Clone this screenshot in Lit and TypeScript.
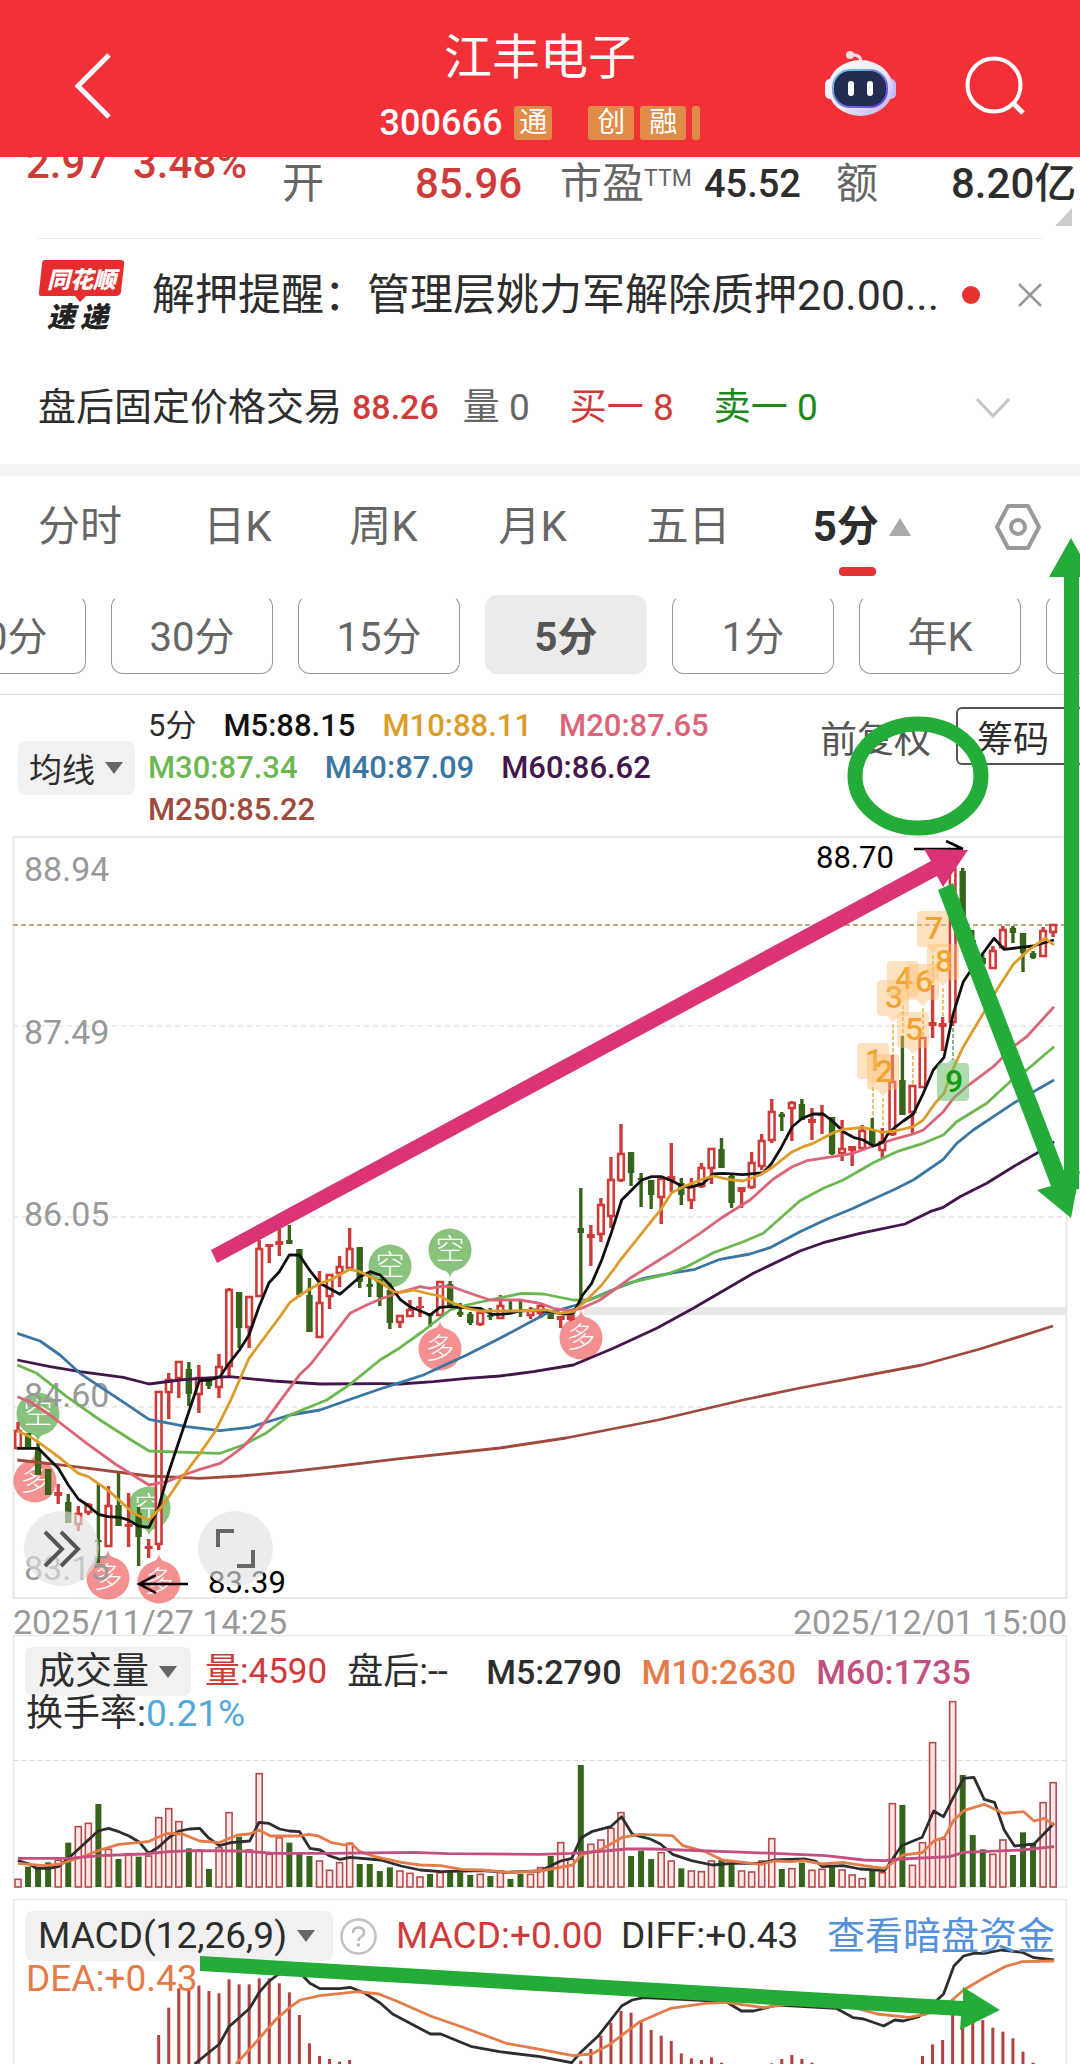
import { LitElement, html, svg, css } from "lit";
import { customElement } from "lit/decorators.js";

type Candle = [kind: string, high: number, top: number, bottom: number, low: number];
type Run = [ox: number, oy: number, kx: number, points: string];

const FIRST_X = 18;
const STEP = 10.05;
const barX = (i: number) => FIRST_X + STEP * i;

const CANDLES: Candle[] = [
  ["r", 1422, 1430, 1449, 1449], ["g", 1433, 1433, 1447, 1449], ["g", 1443, 1449, 1475, 1475], ["g", 1469, 1469, 1495, 1495],
  ["r", 1484, 1492, 1496, 1504], ["g", 1494, 1502, 1523, 1523], ["r", 1506, 1513, 1525, 1531], ["r", 1503, 1504, 1513, 1515],
  ["g", 1484, 1540, 1542, 1563], ["r", 1486, 1505, 1547, 1547], ["g", 1473, 1505, 1526, 1526], ["r", 1493, 1524, 1527, 1547],
  ["g", 1507, 1513, 1537, 1566], ["r", 1539, 1546, 1549, 1558], ["r", 1391, 1391, 1545, 1550], ["r", 1373, 1379, 1393, 1419],
  ["r", 1361, 1361, 1379, 1398], ["g", 1362, 1369, 1394, 1406], ["r", 1365, 1377, 1395, 1413], ["g", 1378, 1378, 1386, 1389],
  ["r", 1354, 1366, 1388, 1398], ["r", 1288, 1289, 1367, 1378], ["g", 1292, 1292, 1328, 1348], ["r", 1296, 1296, 1328, 1348],
  ["r", 1240, 1248, 1297, 1297], ["r", 1244, 1244, 1247, 1263], ["r", 1228, 1241, 1245, 1256], ["g", 1225, 1240, 1244, 1244],
  ["g", 1249, 1249, 1295, 1297], ["g", 1278, 1295, 1332, 1332], ["r", 1271, 1302, 1338, 1338], ["r", 1274, 1274, 1297, 1309],
  ["r", 1256, 1266, 1274, 1287], ["r", 1228, 1248, 1269, 1269], ["g", 1247, 1247, 1282, 1288], ["g", 1274, 1284, 1287, 1297],
  ["g", 1279, 1279, 1297, 1306], ["g", 1283, 1290, 1323, 1329], ["r", 1315, 1315, 1323, 1328], ["r", 1300, 1309, 1317, 1317],
  ["r", 1297, 1306, 1307, 1317], ["g", 1313, 1314, 1316, 1327], ["r", 1281, 1281, 1316, 1316], ["g", 1281, 1284, 1308, 1308],
  ["g", 1303, 1312, 1315, 1317], ["g", 1312, 1314, 1323, 1325], ["r", 1311, 1312, 1325, 1326], ["g", 1308, 1315, 1317, 1320],
  ["r", 1295, 1305, 1319, 1319], ["g", 1300, 1310, 1312, 1314], ["g", 1300, 1310, 1311, 1317], ["r", 1307, 1310, 1316, 1319],
  ["r", 1303, 1305, 1314, 1318], ["g", 1310, 1310, 1319, 1319], ["r", 1316, 1316, 1320, 1328], ["r", 1315, 1315, 1320, 1321],
  ["g", 1188, 1228, 1233, 1300], ["r", 1225, 1234, 1238, 1266], ["r", 1198, 1204, 1235, 1242], ["r", 1157, 1179, 1217, 1228],
  ["r", 1124, 1153, 1181, 1182], ["g", 1152, 1152, 1173, 1186], ["g", 1173, 1178, 1180, 1207], ["g", 1180, 1180, 1195, 1209],
  ["r", 1178, 1178, 1198, 1224], ["r", 1143, 1176, 1181, 1192], ["g", 1178, 1183, 1195, 1205], ["r", 1178, 1185, 1201, 1209],
  ["r", 1163, 1167, 1187, 1188], ["r", 1148, 1148, 1169, 1184], ["g", 1138, 1149, 1168, 1168], ["g", 1175, 1176, 1203, 1208],
  ["r", 1187, 1187, 1192, 1208], ["r", 1152, 1162, 1188, 1189], ["r", 1134, 1140, 1167, 1170], ["r", 1099, 1111, 1141, 1143],
  ["g", 1112, 1114, 1117, 1131], ["r", 1101, 1102, 1109, 1141], ["g", 1099, 1104, 1120, 1120], ["r", 1108, 1119, 1123, 1140],
  ["r", 1105, 1114, 1115, 1134], ["g", 1117, 1117, 1154, 1155], ["r", 1120, 1148, 1154, 1161], ["r", 1146, 1146, 1151, 1166],
  ["r", 1125, 1130, 1149, 1149], ["g", 1118, 1130, 1145, 1146], ["r", 1128, 1141, 1151, 1158], ["r", 1055, 1081, 1135, 1136],
  ["g", 1036, 1080, 1115, 1115], ["r", 1085, 1085, 1113, 1133], ["r", 1037, 1037, 1088, 1088], ["r", 985, 1022, 1026, 1038],
  ["r", 1017, 1023, 1027, 1051], ["r", 860, 868, 1023, 1026], ["g", 868, 871, 930, 930], ["g", 930, 940, 950, 955],
  ["g", 955, 958, 964, 965], ["r", 946, 950, 969, 969], ["r", 926, 929, 948, 949], ["g", 926, 928, 933, 943],
  ["g", 933, 933, 953, 972], ["g", 951, 953, 958, 959], ["r", 927, 930, 957, 957], ["r", 924, 924, 933, 937],
];

const VOLUMES =
  "r715 g680 g680 g667 r658 g608 r557 r547 g492 r625 g657 r638 g650 r645 r530 r503 r542 g625 r627 g687 r620 r515 g590 r627 r398 r640 r590 g608 g642 g648 r660 r688 r665 r607 g672 g672 g693 g682 r690 r697 r708 g702 r695 g695 g697 g705 r700 g708 r690 g717 g702 r700 r680 g648 r605 r655 g375 r610 r597 r562 r515 g648 g632 g657 r635 r660 g685 r690 r692 r660 g660 g670 r690 r693 r660 r593 g687 r683 g668 r688 r685 g680 r687 r702 r713 g692 r695 r488 g495 r673 r605 r305 r595 r182 g405 g585 g628 r640 r597 g645 g577 g612 r485 r425".split(" ");

const MACD_RUNS: [number, number[]][] = [
  [14, [1185, 1103, 1045, 1045, 1037, 1053, 1060, 1018, 1033, 1033, 1015, 1015, 1030, 1057, 1125, 1210, 1248, 1257, 1265, 1260]],
  [56, [1262, 1227, 1187, 1148, 1113, 1118, 1140, 1170, 1187, 1203, 1240, 1255, 1260, 1252, 1268]],
  [75, [1270, 1257, 1245, 1257, 1268]],
  [90, [1248, 1213, 1200, 1125, 1120, 1130, 1140, 1163, 1175, 1195, 1235, 1268]],
];

const A = (p: string): Run => [0, 1180, 3, p];
const B = (p: string): Run => [400, 1100, 3, p];
const C = (p: string): Run => [540, 1080, 3, p];
const D = (p: string): Run => [780, 820, 3, p];
const L = (p: string): Run => [0, 1640, 2.904, p];
const R = (p: string): Run => [540, 1640, 2.904, p];

const PRICE_LINES: [string, Run[]][] = [
  ["#a0493c", [
    A("52,840 200,857 447,888 600,895 720,888 870,875 1000,860 1200,836"),
    [0, 0, 1, "500,4344 566,4314 658,4260 743,4200 800,4164 922,4095 980,4047 1053,3978"],
  ]],
  ["#43154c", [
    A("52,540 150,560 240,575 370,592 447,612 540,600 600,595 690,590 820,603 960,612 1140,611"),
    B("0,852 100,845 200,835 300,828 400,815 520,795 640,745 770,685 880,625 1060,520"),
    C("780,513 850,488 960,460"),
    D("280,1232 375,1212 450,1175 490,1162 540,1130 620,1090 700,1040 770,1000 822,965"),
  ]],
  ["#3a76a4", [
    A("52,460 120,483 180,525 240,580 300,620 390,680 447,718 560,740 660,752 750,742 870,705 960,690 1060,655 1140,627"),
    B("0,848 70,825 200,765 300,715 440,640 530,615 650,565 730,535 810,520 885,508 960,478 1050,462 1110,443"),
    C("780,455 860,418 940,385"),
    D("280,1137 340,1110 400,1080 490,1018 530,970 580,930 700,850 822,780"),
  ]],
  ["#6bb850", [
    A("52,555 110,580 200,650 300,720 390,778 447,813 560,817 660,820 730,795 800,758 870,705 980,660 1050,613 1140,540"),
    B("0,743 70,693 150,630 200,615 270,600 365,580 430,582 520,600 570,600 620,580 680,550 800,523 860,500 940,458 1030,425 1090,400"),
    C("780,362 850,325 910,300"),
    D("280,1028 350,995 430,970 490,945 530,905 620,850 690,785 740,750 822,680"),
  ]],
  ["#dc6478", [
    A("52,650 90,665 150,705 260,790 350,855 447,915 500,905 550,885 600,868 660,850 690,830 730,800 780,745 850,650 900,583 930,555 990,478 1050,400 1100,375 1140,358"),
    B("0,577 60,560 90,565 130,558 160,562 210,580 270,600 360,600 420,610 460,625 500,632 545,625 600,600 690,535 810,460 900,400 970,350 1050,300 1120,237"),
    C("757,260 800,242 860,233 940,220"),
    D("280,978 340,958 400,942 430,930 490,875 520,835 560,800 640,740 700,680 740,650 822,560"),
  ]],
  ["#101010", [
    A("52,805 115,805 150,840 175,865 205,915 235,957 262,975 295,1003 325,1010 360,1012 385,1020 415,1038 447,1042 475,985 505,880 535,790 565,700 598,602 630,600 660,590 687,550 717,512 747,465 777,380 807,308 838,275 868,225 898,225 930,272 960,310 1020,343 1080,290 1110,275 1140,285 1170,315"),
    B("0,598 30,620 90,645 120,622 150,620 180,622 240,625 275,643 300,643 330,640 360,633 400,630 450,635 490,642 520,640 548,585 575,550 605,480 635,395 665,300 695,270 725,240 755,230 785,230 815,242 845,258 870,262 910,250 940,222 970,220 1030,224 1090,218 1115,190 1145,140"),
    C("757,140 787,115 820,102 850,102 880,125 910,155 940,172 970,180"),
    D("280,978 290,975 310,965 325,940 345,922 370,903 400,882 430,820 460,750 492,712 520,580 550,485 580,440 605,405 642,355 672,388 760,378 822,360"),
  ]],
  ["#dc9c28", [
    A("52,752 90,770 120,790 175,830 235,880 265,890 330,935 400,1000 447,1020 490,975 540,900 600,820 645,755 690,665 747,535 810,450 840,410 870,367 900,345 960,310 990,300 1050,268 1080,275 1140,305 1180,335"),
    B("0,577 40,570 90,582 120,588 150,605 200,625 240,633 330,633 440,630 480,640 520,635 560,600 605,555 640,510 665,475 725,400 785,325 815,278 850,260 910,237 940,228 985,238 1030,243 1080,225 1120,200"),
    C("757,215 790,200 820,190 880,158 910,148 970,142 1000,150"),
    D("310,937 345,933 400,920 430,900 465,850 492,820 520,745 550,680 610,580 650,510 700,433 740,395 795,355 822,375"),
  ]],
];

const VOLUME_LINES: [string, Run[]][] = [
  ["#2d2d2d", [
    L("52,662 85,672 105,685 140,685 170,680 215,640 285,573 315,565 345,575 375,588 405,607 432,640 460,622 490,593 520,573 550,567 580,565 605,593 637,617 670,608 725,603 752,547 780,550 812,567 840,573 870,575 900,625 930,630 958,648 988,658 1017,652 1105,660 1165,678 1220,690 1280,695 1400,692 1470,697"),
    R("0,693 60,663 92,655 120,593 150,575 205,560 237,530 268,583 320,597 350,612 385,643 440,662 500,675 560,670 640,670 680,660 770,657 800,663 820,680 880,677 930,687 1000,692 1050,617 1110,592 1143,513 1172,530 1200,473 1230,415 1260,412 1290,478 1320,487 1348,570 1378,618 1435,612 1493,550"),
  ]],
  ["#e57b48", [
    L("52,670 130,677 175,672 240,650 290,630 345,613 430,605 485,580 530,582 580,603 635,608 690,585 725,582 752,570 785,588 870,588 895,583 925,588 960,607 1000,615 1020,610 1045,635 1090,650 1165,667 1220,675 1280,677 1340,688 1400,690 1480,697"),
    R("0,693 95,675 120,645 180,627 240,592 290,583 385,587 415,617 480,635 530,660 640,673 680,663 730,665 765,662 820,672 880,667 940,677 1000,685 1055,645 1110,638 1145,602 1175,592 1200,543 1230,512 1290,493 1345,520 1405,515 1435,543 1465,535 1493,555"),
  ]],
  ["#c34e80", [
    L("52,655 200,655 290,647 420,642 490,635 560,632 700,633 800,640 950,640 1200,637 1300,641"),
    R("0,643 90,640 190,633 250,627 330,627 600,637 830,647 940,660 1000,662 1050,657 1190,650 1230,637 1400,630 1493,620"),
  ]],
];

const MACD_LINES: [string, Run[]][] = [
  ["#2d2d2d", [
    L("565,1272 637,1212 665,1160 725,1105 752,1058 780,1025 805,1005 845,992 880,1008 900,1030 930,1046 985,1046 1017,1042 1060,1060 1105,1090 1140,1122 1250,1182 1280,1182 1370,1220 1450,1235"),
    R("0,1250 92,1268 120,1235 170,1187 237,1098 268,1080 300,1073 410,1078 540,1085 585,1113 620,1113 690,1095 860,1105 910,1133 940,1137 998,1158 1030,1140 1055,1143 1100,1130 1172,1062 1202,978 1230,948 1260,940 1290,940 1340,930 1400,937 1435,953 1493,960"),
  ]],
  ["#e57b48", [
    L("685,1272 725,1228 800,1140 840,1103 872,1080 930,1067 1040,1055 1100,1062 1160,1087 1250,1128 1340,1160 1470,1210"),
    R("0,1228 95,1247 150,1242 200,1215 290,1145 380,1105 480,1090 540,1087 650,1103 740,1090 900,1100 980,1122 1070,1132 1120,1123 1170,1105 1230,1050 1290,1013 1350,980 1400,965 1493,963"),
  ]],
];

const project = (runs: Run[]) =>
  runs
    .map(([ox, oy, kx, points]) =>
      points
        .split(" ")
        .map((pair) => {
          const [x, y] = pair.split(",").map(Number);
          return `${(ox + x / kx).toFixed(1)},${(oy + y / 3).toFixed(1)}`;
        })
        .join(" "),
    )
    .join(" ");

const drawLines = (lines: [string, Run[]][]) =>
  lines.map(([color, runs]) => svg`<polyline class="trace" stroke=${color} points=${project(runs)}></polyline>`);

const drawCandle = ([kind, high, top, bottom, low]: Candle, i: number) => {
  const x = barX(i);
  if (kind === "g") {
    return svg`<g fill="#35641a"><rect x=${x - 1.7} y=${high} width="3.4" height=${low - high}></rect>
      <rect x=${x - 3.2} y=${top} width="6.4" height=${Math.max(bottom - top, 2)}></rect></g>`;
  }
  const hollow = bottom - top > 5;
  return svg`<g fill="#cf3b39"><rect x=${x - 1.7} y=${high} width="3.4" height=${top - high + 1}></rect>
    <rect x=${x - 1.7} y=${bottom - 1} width="3.4" height=${low - bottom + 1}></rect>
    ${hollow
      ? svg`<rect x=${x - 2.8} y=${top + 1} width="5.6" height=${bottom - top - 2} fill="#fff" stroke="#cf3b39" stroke-width="2.6"></rect>`
      : svg`<rect x=${x - 4} y=${top} width="8" height=${Math.max(bottom - top, 2)}></rect>`}</g>`;
};

const drawVolume = (entry: string, i: number) => {
  const x = barX(i);
  const top = 1640 + Number(entry.slice(1)) / 3;
  return entry[0] === "g"
    ? svg`<rect x=${x - 3} y=${top} width="6" height=${1887 - top} fill="#35641a"></rect>`
    : svg`<rect x=${x - 3} y=${top + 1} width="6" height=${1886 - top} fill="#fde7e7" stroke="#b84a4a" stroke-width="1.6"></rect>`;
};

const PINS: [string, number, number][] = [
  ["空", 38, 1414], ["空", 149, 1508], ["空", 390, 1266], ["空", 450, 1250],
  ["多", 35, 1481], ["多", 108, 1578], ["多", 159, 1582], ["多", 440, 1349], ["多", 581, 1338],
];

const drawPin = ([label, x, y]: [string, number, number]) => {
  const down = label === "空";
  const color = down ? "#72b765" : "#f27d7b";
  const s = down ? 1 : -1;
  return svg`<g><g fill=${color} opacity="0.84"><circle cx=${x} cy=${y} r="21.5"></circle>
    <path d="M${x - 8} ${y + 19 * s} Q${x} ${y + 22 * s} ${x} ${y + 29 * s} Q${x} ${y + 22 * s} ${x + 8} ${y + 19 * s}Z"></path></g>
    <text class="pin-text" x=${x} y=${y + 10}>${label}</text></g>`;
};

const TAGS: [string, number, number, number][] = [
  ["1", 873, 1043, 1118], ["2", 883, 1054, 1128], ["3", 893, 980, 1055], ["4", 903, 961, 1036],
  ["5", 913, 1012, 1085], ["6", 923, 964, 1037], ["7", 933, 911, 985], ["8", 943, 944, 1017],
];

const drawTag = ([label, x, y, end]: [string, number, number, number]) => svg`<g>
  <path d="M${x} ${y + 44} V${end}" stroke="#f0c070" stroke-width="2" stroke-dasharray="4 2"></path>
  <path d="M${x - 12} ${y} h24 q4 0 4 4 v28 q0 4 -4 4 h-6 l-6 6 l-6 -6 h-6 q-4 0 -4 -4 v-28 q0 -4 4 -4Z" fill="#fdbf72" opacity="0.45"></path>
  <text class="tag-text" x=${x + 1} y=${y + 28}>${label}</text></g>`;

const caret = html`<svg class="caret" viewBox="0 0 18 12" aria-hidden="true"><path d="M0 0h18l-9 12z" fill="#666"></path></svg>`;

@customElement("app-root")
export class AppRoot extends LitElement {
  static styles = css`
    :host { display: block; background: #fff; color: #2d2d2d; font-family: Roboto, "Noto Sans CJK SC", sans-serif; }
    * { box-sizing: border-box; }
    button { border: 0; padding: 0; margin: 0; background: none; color: inherit; font: inherit; white-space: nowrap; }
    svg { display: block; }
    .page { position: relative; overflow: hidden; }
    .red { color: #cf3b39; }
    .green { color: #1a8a1a; }
    .grey { color: #666; }

    .header { display: grid; grid-template-columns: 1fr auto 1fr; align-items: center; padding: 28px 54px 14px 66px; background: #f13038; color: #fff; }
    .back { justify-self: start; }
    .back svg { width: 50px; height: 70px; }
    .title { margin: 0; font-size: 48px; line-height: 60px; font-weight: 400; text-align: center; }
    .heading { margin-left: -12px; display: grid; gap: 15px; }
    .code-row { display: flex; align-items: center; height: 40px; gap: 6px; font-size: 36px; font-weight: 500; line-height: 40px; }
    .badge { width: 46px; height: 34px; border-radius: 3px; background: #e08c48; font-size: 28px; line-height: 34px; text-align: center; font-weight: 400; }
    .badge.first { width: 38px; margin: 0 30px 0 6px; }
    .badge.cut { width: 8px; }
    .tools { display: flex; justify-content: flex-end; align-items: center; gap: 66px; }
    .robot { width: 76px; height: 76px; }
    .search { width: 62px; height: 62px; }

    .quote { display: grid; grid-template-columns: 107fr 149fr 133fr 145fr 144fr 132fr 115fr 127fr; align-items: center; height: 81px; padding: 0 2px 28px 26px; overflow: hidden; white-space: nowrap; font-size: 42px; line-height: 52px; }
    .quote > * { min-width: 0; }
    .quote b { font-weight: 500; }
    .quote .ratio { font-size: 38px; }
    .quote .change { margin-top: -40px; }
    .quote sup { font-size: 23px; line-height: 20px; vertical-align: 12px; }
    .rule { margin: 0 38px; border: 0; border-top: 1px solid #ebebeb; }
    .corner { position: absolute; right: 8px; top: 208px; width: 17px; height: 18px; }

    .news { display: flex; align-items: center; padding: 20px 38px; line-height: 52px; font-size: 43px; }
    .logo { width: 86px; height: 72px; margin-right: 28px; flex: none; }
    .news-text { color: inherit; text-decoration: none; white-space: nowrap; overflow: hidden; text-overflow: clip; flex: 1; }
    .dot { width: 18px; height: 18px; border-radius: 50%; background: #e73131; margin: 0 38px 0 12px; }
    .close svg { width: 24px; height: 24px; }

    .after { display: flex; align-items: center; padding: 30px 69px 30px 38px; line-height: 53px; font-size: 37px; }
    .after .name { font-size: 38px; margin-right: 10px; }
    .after b { font-size: 34px; font-weight: 500; margin-right: 24px; }
    .after .gap { margin-right: 40px; }
    .more { margin-left: auto; }
    .more svg { width: 36px; height: 22px; }
    .band { height: 12px; background: #f4f4f4; }

    .tabs { display: grid; grid-template-columns: 165fr 146fr 149fr 148fr 166fr 180fr 87fr; padding: 25px 0 0 38px; font-size: 42px; line-height: 52px; color: #666; }
    .tabs button { text-align: left; align-self: start; line-height: 52px; }
    .tabs .active { font-weight: 700; color: #2d2d2d; display: grid; grid-template-columns: auto 1fr; column-gap: 10px; align-items: center; }
    .tabs .active::after { content: ""; grid-column: 1 / 3; width: 37px; height: 9px; margin: 14px 0 0 26px; border-radius: 4px; background: #e23232; }
    .up { width: 22px; height: 18px; }
    .gear { width: 50px; height: 52px; }
    .pills { display: flex; gap: 25px; margin-left: -76px; padding: 19px 0 20px; border-bottom: 1px solid #e4e4e4; overflow: hidden; }
    .pill { flex: none; width: 162px; height: 79px; padding-bottom: 2px; border: 1px solid #999; border-top-color: transparent; border-radius: 12px; color: #666; font-size: 40px; text-align: center; }
    .pill.on { background: #ebebeb; border-color: #ebebeb; color: #555; font-weight: 700; }

    .legend { display: grid; grid-template-columns: 130px 1fr auto; padding: 10px 0 0 18px; }
    .drop { display: inline-flex; align-items: center; border-radius: 8px; background: #f1f1f1; }
    .caret { width: 18px; height: 12px; }
    .ma { align-self: center; width: 117px; height: 54px; padding-left: 11px; gap: 10px; font-size: 33px; }
    .values { display: flex; flex-wrap: wrap; column-gap: 27px; max-width: 600px; font-size: 31px; line-height: 42px; }
    .values span + span, .avg { font-weight: 500; }
    .side { display: flex; align-items: flex-start; gap: 25px; font-size: 37px; }
    .adjust { margin-top: 8px; line-height: 56px; color: #555; }
    .chips { width: 124px; height: 58px; margin-top: 2px; padding-left: 19px; text-align: left; border: 2px solid #555; border-right: 0; border-radius: 6px 0 0 6px; font-size: 36px; }

    .stage { position: relative; }
    .chart { width: 100%; height: auto; }
    .chart text { font-size: 34px; fill: #999; }
    .chart .ink { font-size: 31px; fill: #000; }
    .chart .pin-text { font-size: 29px; font-weight: 300; fill: #fff; text-anchor: middle; }
    .chart .tag-text { font-size: 32px; font-weight: 500; fill: #f2a432; text-anchor: middle; }
    .chart .tag-green { fill: #159a15; }
    .trace { fill: none; stroke-width: 2.8; stroke-linejoin: round; }
    .round { position: absolute; top: 680px; width: 75px; height: 75px; border-radius: 50%; background: rgba(226, 226, 226, 0.64); }
    .round.next { left: 24px; }
    .round.full { left: 198px; }
    .dates { display: flex; justify-content: space-between; padding: 0 13px; font-size: 34px; line-height: 32px; color: #999; }

    .panel { display: grid; }
    .panel > * { grid-area: 1 / 1; }
    .volume { margin-top: -3px; }
    .info { z-index: 1; padding: 12px 25px 0; line-height: 36px; font-size: 34px; align-self: start; }
    .row { display: flex; align-items: center; white-space: nowrap; }
    .info .drop { height: 49px; padding: 0 14px 0 13px; gap: 10px; font-size: 37px; }
    .vol-row > span { margin-left: 20px; }
    .vol-row .lot { margin-left: 14px; font-size: 35px; }
    .vol-row .late { min-width: 122px; font-size: 36px; }
    .vol-row .first-avg { margin-left: 17px; }
    .second { padding-left: 1px; font-size: 37px; }
    .macd-row { font-size: 37px; }
    .macd-row .drop { width: 308px; height: 50px; }
    .help { margin: 0 19px 0 7px; }
    .help svg { width: 37px; height: 37px; }
    .macd-row .diff { margin-left: 18px; }
    .dark-pool { margin-left: auto; color: #5490dc; text-decoration: none; font-size: 38px; }
    .orange { color: #e57b48; }
    .marks { position: absolute; left: 0; top: 0; z-index: 2; width: 100%; height: auto; pointer-events: none; }
  `;

  render() {
    return html`
      <main class="page">
        <header class="header">
          <button class="back" aria-label="返回">
            <svg viewBox="0 0 50 70"><path d="M43 4 L12 35 L43 66" fill="none" stroke="#fff" stroke-width="5"></path></svg>
          </button>
          <div class="heading">
            <h1 class="title">江丰电子</h1>
            <div class="code-row">
              <span>300666</span><span class="badge first">通</span><span class="badge">创</span><span class="badge">融</span><span class="badge cut"></span>
            </div>
          </div>
          <div class="tools">
            <button aria-label="助手">
              <svg class="robot" viewBox="822 48 76 76">
                <defs>
                  <linearGradient id="shell" x1="0" y1="0" x2="1" y2="1"><stop offset="0" stop-color="#fff"></stop><stop offset="0.55" stop-color="#ece6fb"></stop><stop offset="1" stop-color="#b9a9ee"></stop></linearGradient>
                  <linearGradient id="edge" x1="0" y1="0" x2="1" y2="1"><stop offset="0" stop-color="#76d3e4"></stop><stop offset="1" stop-color="#6432e0"></stop></linearGradient>
                </defs>
                <path d="M861 61 Q860 54 851 55" fill="none" stroke="#f8dfe8" stroke-width="3"></path>
                <circle cx="850" cy="55" r="4" fill="#fbdde3"></circle>
                <rect x="825" y="79" width="10" height="20" rx="5" fill="#f3effc"></rect>
                <rect x="886" y="79" width="10" height="20" rx="5" fill="#c5baf2"></rect>
                <ellipse cx="860.500" cy="88" rx="32.500" ry="28" fill="url(#shell)"></ellipse>
                <rect x="833" y="70" width="54" height="37" rx="17" fill="#232d52" stroke="url(#edge)" stroke-width="2"></rect>
                <rect x="848" y="81" width="6" height="15" rx="3" fill="#fff"></rect>
                <rect x="867" y="81" width="6" height="15" rx="3" fill="#fff"></rect>
              </svg>
            </button>
            <button aria-label="搜索">
              <svg class="search" viewBox="964 55 62 62"><circle cx="994" cy="85" r="26.500" fill="none" stroke="#fff" stroke-width="4"></circle><path d="M1012 102 L1023 113" stroke="#fff" stroke-width="5"></path></svg>
            </button>
          </div>
        </header>

        <section class="quote">
          <b class="change red">2.97</b><b class="change red">3.48%</b>
          <span class="grey">开</span><b class="red">85.96</b>
          <span class="grey">市盈<sup>TTM</sup></span><b class="ratio">45.52</b>
          <span class="grey">额</span><b>8.20亿</b>
        </section>
        <svg class="corner" viewBox="0 0 17 18" aria-hidden="true"><path d="M17 0V18H0z" fill="#ccc"></path></svg>
        <hr class="rule" />

        <section class="news">
          <svg class="logo" viewBox="38 258 86 72">
            <path d="M45 259 H121 Q125 259 124 264 L121 291 Q120 295 116 295 H86 L80 301 L75 295 H42 Q38 295 39 291 L42 263 Q42 259 45 259Z" fill="#e52c2e"></path>
            <text x="47" y="287" font-size="23" font-weight="900" font-style="italic" fill="#fff">同花顺</text>
            <text x="47" y="326" font-size="28" font-weight="900" font-style="italic" fill="#222">速</text>
            <text x="80" y="326" font-size="28" font-weight="900" font-style="italic" fill="#222">递</text>
          </svg>
          <a class="news-text" href="#news">解押提醒：管理层姚力军解除质押20.00...</a>
          <span class="dot"></span>
          <button class="close" aria-label="关闭"><svg viewBox="0 0 24 24"><path d="M1 1 L23 23 M23 1 L1 23" stroke="#999" stroke-width="2.500"></path></svg></button>
        </section>

        <section class="after">
          <span class="name">盘后固定价格交易</span><b class="red">88.26</b>
          <span class="grey gap">量 0</span><span class="red gap">买一 8</span><span class="green">卖一 0</span>
          <button class="more" aria-label="展开"><svg viewBox="0 0 36 22"><path d="M2 2 L18 19 L34 2" fill="none" stroke="#c4c4c4" stroke-width="3"></path></svg></button>
        </section>
        <div class="band"></div>

        <nav class="tabs">
          <button>分时</button><button>日K</button><button>周K</button><button>月K</button><button>五日</button>
          <button class="active"><span>5分</span><svg class="up" viewBox="0 0 22 18"><path d="M11 0L22 18H0z" fill="#aaa"></path></svg></button>
          <button aria-label="设置"><svg class="gear" viewBox="0 0 50 52"><path d="M15 5 H35 L46 26 L35 47 H15 L4 26Z" fill="none" stroke="#999" stroke-width="4" stroke-linejoin="round"></path><circle cx="25" cy="26" r="7" fill="none" stroke="#999" stroke-width="4"></circle></svg></button>
        </nav>
        <div class="pills">
          <button class="pill">60分</button><button class="pill">30分</button><button class="pill">15分</button><button class="pill on">5分</button><button class="pill">1分</button><button class="pill">年K</button><button class="pill"></button>
        </div>

        <section class="legend">
          <button class="drop ma">均线${caret}</button>
          <div class="values">
            <span>5分</span><span style="color:#101010">M5:88.15</span><span style="color:#dc9c28">M10:88.11</span><span style="color:#dc6478">M20:87.65</span>
            <span style="color:#6bb850">M30:87.34</span><span style="color:#3a76a4">M40:87.09</span><span style="color:#43154c">M60:86.62</span>
            <span style="color:#a0493c">M250:85.22</span>
          </div>
          <div class="side"><span class="adjust">前复权</span><button class="chips">筹码</button></div>
        </section>

        <section class="stage">
          <svg class="chart" viewBox="0 831 1080 775">
            <path d="M13.500 1598 V837 H1066.500 V1598Z" fill="none" stroke="#e8e8e8" stroke-width="2"></path>
            <path d="M13 1026 H1066 M13 1217 H1066 M13 1407 H1066" stroke="#ebebeb" stroke-width="2" stroke-dasharray="5 4"></path>
            <path d="M13 925 H1066" stroke="#bfa67c" stroke-width="2" stroke-dasharray="5 3"></path>
            <rect x="584" y="1307" width="482" height="8" fill="#e8e8e8"></rect>
            ${PINS.map(drawPin)}
            <text x="24" y="881">88.94</text><text x="24" y="1044">87.49</text><text x="24" y="1226">86.05</text>
            <text x="24" y="1407">84.60</text><text x="24" y="1580">83.15</text>
            ${CANDLES.map(drawCandle)}
            ${drawLines(PRICE_LINES)}
            ${TAGS.map(drawTag)}
            <path d="M953 1028 V1060" stroke="#7dbf7d" stroke-width="2" stroke-dasharray="4 2"></path>
            <path d="M941 1063 h6 l6 -5 l6 5 h6 q4 0 4 4 v30 q0 4 -4 4 h-24 q-4 0 -4 -4 v-30 q0 -4 4 -4Z" fill="#6cc06c" opacity="0.55"></path>
            <text class="tag-text tag-green" x="954" y="1092">9</text>
            <text class="ink" x="816" y="868">88.70</text>
            <path d="M914 849 H963 M946 841 L963 849" stroke="#000" stroke-width="2.500" fill="none"></path>
            <text class="ink" x="208" y="1593">83.39</text>
            <path d="M188 1584 H139 M156 1575 L139 1584 L156 1593" stroke="#000" stroke-width="2.500" fill="none"></path>
          </svg>
          <button class="round next" aria-label="下一页"><svg viewBox="0 0 75 75"><path d="M21 21 L38 38 L21 55 M37 21 L54 38 L37 55" fill="none" stroke="#555" stroke-width="4"></path></svg></button>
          <button class="round full" aria-label="全屏"><svg viewBox="0 0 75 75"><path d="M20 36 V20 H36 M39 55 H55 V39" fill="none" stroke="#666" stroke-width="4"></path></svg></button>
        </section>
        <div class="dates"><span>2025/11/27 14:25</span><span>2025/12/01 15:00</span></div>

        <section class="panel volume">
          <div class="info">
            <div class="row vol-row">
              <button class="drop">成交量${caret}</button>
              <span class="red lot">量:4590</span><span class="late">盘后:--</span><span class="avg first-avg">M5:2790</span>
              <span class="avg orange">M10:2630</span><span class="avg" style="color:#c34e80">M60:1735</span>
            </div>
            <div class="row second">换手率:<span style="color:#52a8dc">0.21%</span></div>
          </div>
          <svg class="chart" viewBox="0 1635 1080 264">
            <path d="M13.500 1887 V1635.500 H1066.500 V1887Z" fill="none" stroke="#e8e8e8" stroke-width="1.500"></path>
            <path d="M13 1760.500 H1066" stroke="#dcdcdc" stroke-dasharray="5 3"></path>
            ${VOLUMES.map(drawVolume)} ${drawLines(VOLUME_LINES)}
          </svg>
        </section>

        <section class="panel">
          <div class="info">
            <div class="row macd-row">
              <button class="drop">MACD(12,26,9)${caret}</button>
              <button class="help" aria-label="说明"><svg viewBox="0 0 37 37"><circle cx="18.500" cy="18.500" r="17" fill="none" stroke="#c2c2c2" stroke-width="2.500"></circle><path d="M13 15 Q13 9.500 18.500 9.500 Q24 9.500 24 14.500 Q24 17 21 19 Q18.500 20.500 18.500 23" fill="none" stroke="#bbb" stroke-width="2.500"></path><circle cx="18.500" cy="27" r="1.800" fill="#bbb"></circle></svg></button>
              <span class="red">MACD:+0.00</span><span class="diff">DIFF:+0.43</span>
              <a class="dark-pool" href="#funds">查看暗盘资金</a>
            </div>
            <div class="row second orange">DEA:+0.43</div>
          </div>
          <svg class="chart" viewBox="0 1899 1080 165">
            <path d="M13.500 2064 V1899.500 H1066.500 V2064" fill="none" stroke="#e8e8e8" stroke-width="1.500"></path>
            ${MACD_RUNS.map(([start, tops]) =>
              tops.map((v, k) => svg`<rect x=${barX(start + k) - 1.5} y=${1640 + v / 3} width="3" height=${424 - v / 3} fill="#b54040"></rect>`),
            )}
            ${drawLines(MACD_LINES)}
          </svg>
        </section>

        <svg class="marks" viewBox="0 0 1080 2064" aria-hidden="true">
          <polygon points="211,1250 931,861 924,849 968,850 943,887 937,876 217,1263" fill="#db3476"></polygon>
          <g fill="#23ac38">
            <polygon points="938,890 953,883 1066,1176 1080,1171 1071,1218 1037,1190 1051,1186"></polygon>
            <polygon points="1071,538 1093,577 1079,577 1079,1189 1064,1189 1064,577 1049,577"></polygon>
            <polygon points="200,1956 963,2001 963,1987 1000,2010 960,2030 961,2016 200,1971"></polygon>
          </g>
          <ellipse cx="918" cy="776" rx="63" ry="52" fill="none" stroke="#23ac38" stroke-width="15"></ellipse>
        </svg>
      </main>
    `;
  }
}
